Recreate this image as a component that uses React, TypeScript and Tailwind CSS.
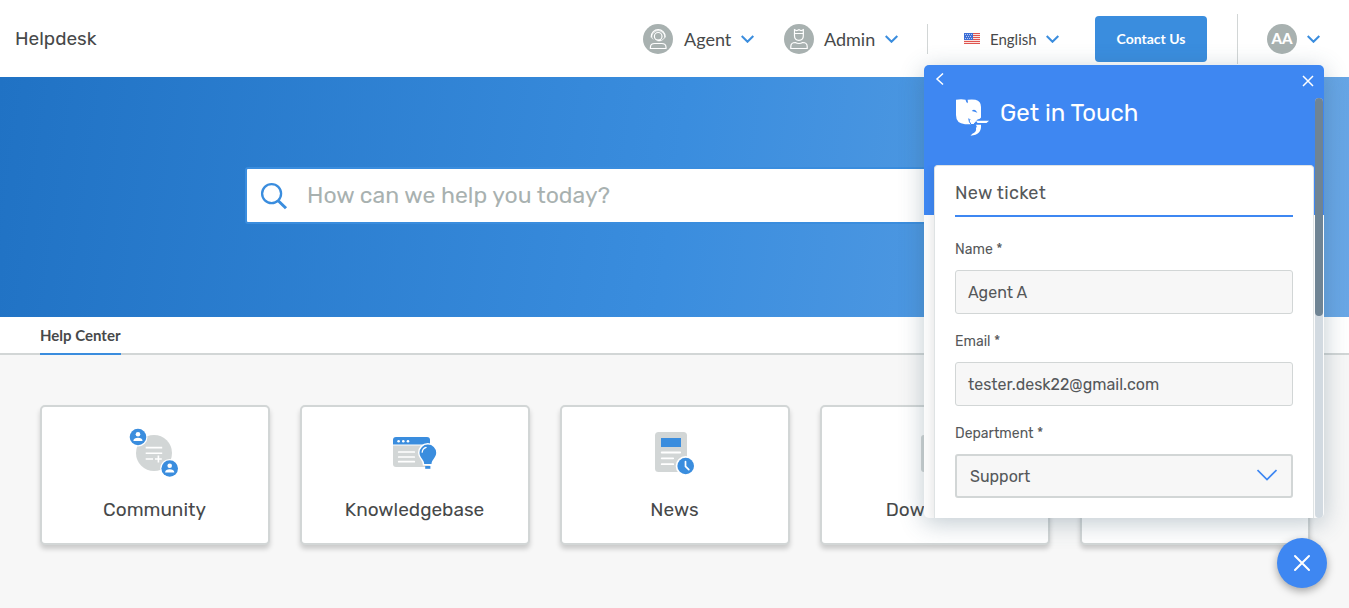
import React from 'react';

const rubik = "font-['Rubik','Roboto',sans-serif]";
const lato = "font-['Lato',sans-serif]";

function Chevron({ className }: { className: string }) {
  return (
    <svg viewBox="0 0 14 8" className={`block shrink-0 ${className}`} fill="none" stroke="#3a8dde" strokeWidth="2.100">
      <path d="M.7 1l5.800 5.700L12.300 1" />
    </svg>
  );
}

function AgentAvatar() {
  return (
    <svg viewBox="0 0 30 30" className="block size-[30px] shrink-0" fill="none" stroke="#fff" strokeWidth="1">
      <circle cx="15" cy="15" r="15" fill="#a8b1b0" stroke="none" />
      <path d="M8.300 13.500v-1a6.900 6.900 0 0 1 13.800 0v1" strokeWidth="1.200" />
      <circle cx="15.200" cy="12.300" r="3.800" strokeWidth="1.200" />
      <path d="M10.300 15.300c-2-.6-2-5.200 0-6 2.200-3.500 7.600-3.500 9.800 0 2 .8 2 5.400 0 6l-1.600 1.200h-3" strokeWidth=".8" />
      <path d="M14.500 16.500h3" strokeWidth="1.500" />
      <path d="M7.400 24.500v-1.300c0-2.300 1.800-3.700 4.400-3.700h6.800c2.600 0 4.400 1.400 4.400 3.700v1.300z" strokeWidth="1.200" />
    </svg>
  );
}

function AdminAvatar() {
  return (
    <svg viewBox="0 0 30 30" className="block size-[30px] shrink-0" fill="none" stroke="#fff" strokeWidth="1.200">
      <circle cx="15" cy="15" r="15" fill="#a8b1b0" stroke="none" />
      <path d="M10.500 10V5.600l2.200 1.100L15 5.600l2.100 1.100 2.200-1.100V10" />
      <path d="M10.500 9.500h8.800" strokeWidth="1" />
      <path d="M10.500 9.500v2.600c0 2.500 1.900 4.200 4.400 4.200s4.400-1.700 4.400-4.200V9.500" />
      <path d="M6.800 24.500v-2c0-2.500 2-4 4.600-4 1.100.7 2.300 1 3.600 1s2.500-.3 3.600-1c2.600 0 4.600 1.500 4.600 4v2z" />
    </svg>
  );
}

function Flag() {
  return (
    <svg viewBox="0 0 16 11" className="block h-[11px] w-4 shrink-0">
      <rect width="16" height="11" fill="#fbe3e0" />
      <path d="M0 .5h16M0 2.500h16M0 4.500h16M0 6.500h16M0 8.500h16M0 10.500h16" stroke="#df5550" />
      <rect width="9" height="7" fill="#3d6fd6" />
      <path d="M1 1.500h7M2 3.500h6M1 5.500h7" stroke="#b9caf0" strokeDasharray="1 1" />
    </svg>
  );
}

function Person({ x, y }: { x: number; y: number }) {
  return (
    <g transform={`translate(${x} ${y})`}>
      <circle r="9.500" fill="#fff" />
      <circle r="8.300" fill="#3a8dde" />
      <circle cy="-2.700" r="2.300" fill="#fff" />
      <path d="M-4.600 4c0-2.400 2.200-3.300 4.600-3.300S4.600 1.600 4.600 4z" fill="#fff" />
    </g>
  );
}

function CommunityIcon() {
  return (
    <svg viewBox="0 0 50 50" className="block size-[50px]">
      <circle cx="25" cy="25" r="18" fill="#d2d6d6" />
      <path d="M16.700 19.600h16.500M16.700 25.300h16.500M16.700 31h7.300M26 31h6.800M29.400 27.500v7" stroke="#fff" strokeWidth="1.600" />
      <Person x={9} y={9} />
      <Person x={40.700} y={40.500} />
    </svg>
  );
}

function KnowledgeIcon() {
  return (
    <svg viewBox="0 0 50 50" className="block size-[50px]">
      <path d="M4 17.600h37V36a3 3 0 0 1-3 3H7a3 3 0 0 1-3-3z" fill="#d2d6d6" />
      <path d="M7 9h31a3 3 0 0 1 3 3v4.600H4V12a3 3 0 0 1 3-3z" fill="#3a8dde" />
      <g fill="#fff">
        <circle cx="9.600" cy="13.300" r="1.300" />
        <circle cx="14.300" cy="13.300" r="1.300" />
        <circle cx="19" cy="13.300" r="1.300" />
      </g>
      <path d="M9.700 24h15.600M9.700 29h15.600M9.700 33.700h15.600" stroke="#fff" strokeWidth="1.700" strokeLinecap="round" />
      <path
        d="M38.900 16.500a8.300 8.300 0 0 0-8.400 8.300c0 2.400 1.200 4.300 2.600 6.100 1.300 1.700 1.900 2.900 2.100 5.100h7.300c.2-2.200.8-3.400 2.100-5.100 1.400-1.800 2.600-3.700 2.600-6.100a8.300 8.300 0 0 0-8.300-8.300z"
        fill="#3a8dde" stroke="#fff" strokeWidth="3" paintOrder="stroke"
      />
      <path d="M36.200 38h5.200v2.800h-5.200z" fill="#3a8dde" />
      <path d="M33.200 24.200c.2-2.300 1.600-4.100 3.900-4.800" stroke="#fff" strokeWidth="1.300" fill="none" strokeLinecap="round" />
    </svg>
  );
}

function NewsIcon() {
  return (
    <svg viewBox="0 0 50 50" className="block size-[50px]">
      <rect x="6" y="4" width="32" height="40" rx="3.500" fill="#d2d6d6" />
      <path d="M12 10h20v9H12z" fill="#3a8dde" />
      <path d="M12.700 24.500h18.500M12.700 30.300h11.500M12.700 36.200h11.500" stroke="#fff" strokeWidth="1.800" strokeLinecap="round" />
      <circle cx="36.700" cy="38" r="10" fill="#fff" />
      <circle cx="36.700" cy="38" r="8.300" fill="#3a8dde" />
      <path d="M36.500 33.500v4.800l3.300 3.300" stroke="#fff" strokeWidth="1.700" fill="none" strokeLinecap="round" />
    </svg>
  );
}

function DownloadsIcon() {
  return (
    <svg viewBox="0 0 50 50" className="block size-[50px]">
      <rect x="12" y="7" width="30" height="37" rx="3" fill="#d2d6d6" />
      <path d="M26 16v16m-6-6 6 6 6-6" stroke="#3a8dde" strokeWidth="3" fill="none" />
    </svg>
  );
}

function HelpCard({ icon, label }: { icon?: React.ReactNode; label?: string }) {
  return (
    <div className="flex h-[140px] w-[230px] shrink-0 flex-col items-center rounded-[5px] border-2 border-[#d2d6d6] bg-white pt-[21px] shadow-[0_4px_5px_rgba(0,0,0,0.18)]">
      <div className="mr-[2px] h-[50px]">{icon}</div>
      <div className={`mt-[20px] mr-px text-[19px] leading-6 text-[#47494a] ${rubik}`}>{label}</div>
    </div>
  );
}

function Header() {
  return (
    <header className={`flex h-[77px] items-center bg-white text-[#47494a] ${lato}`}>
      <div className={`ml-[15px] w-[628px] text-[19px] leading-6 ${rubik}`}>Helpdesk</div>
      <AgentAvatar />
      <span className="ml-[11px] w-[57px] pt-[2px] text-[18px]">Agent</span>
      <Chevron className="h-2 w-[14px]" />
      <div className="ml-[29px]"><AdminAvatar /></div>
      <span className="ml-[10px] w-[61px] pt-[2px] text-[18px]">Admin</span>
      <Chevron className="h-2 w-[14px]" />
      <div className="ml-[28px] h-[30px] w-px bg-[#d2d6d6]" />
      <div className="ml-[36px]"><Flag /></div>
      <span className="ml-[10px] w-[56px] pt-[2px] text-[15px]">English</span>
      <Chevron className="h-2 w-[14px]" />
      <button className="ml-[35px] flex h-[46px] w-[112px] items-center justify-center rounded bg-[#3a8dde] text-[14px] font-bold whitespace-nowrap text-white">
        Contact Us
      </button>
      <div className="ml-[30px] h-[50px] w-px bg-[#d2d6d6]" />
      <div className="ml-[29px] flex size-[30px] items-center justify-center rounded-full bg-[#a8b1b0] text-[15px] font-black text-white">AA</div>
      <Chevron className="ml-[10px] h-2 w-[14px]" />
    </header>
  );
}

function Field({ label, value }: { label: string; value: string }) {
  return (
    <div className="mb-[19px]">
      <div className="h-[29px] pt-px text-[14px] leading-[16px]">{label}</div>
      <div className="flex h-[44px] items-center rounded-[3px] border border-[#d2d6d6] bg-[#f7f7f7] px-3 pt-[2px] text-[16px]">{value}</div>
    </div>
  );
}

function Widget() {
  return (
    <aside className={`absolute top-[65px] left-[924px] h-[453px] w-[400px] rounded-[5px] bg-[#fbfbfb] text-[#55585a] shadow-[0_5px_24px_rgba(60,90,110,0.32)] ${rubik}`}>
      <div className="h-[150px] rounded-t-[5px] bg-[#3e87f2] text-white">
        <div className="flex h-[33px] justify-between pt-[8px] pr-[10px] pl-[11px]">
          <svg viewBox="0 0 10 14" className="h-[14px] w-[10px]" fill="none" stroke="currentColor" strokeWidth="1.500">
            <path d="M8 .5L2 6 8 11.500" />
          </svg>
          <svg viewBox="0 0 12 12" className="mt-[2px] size-3" fill="none" stroke="currentColor" strokeWidth="1.500">
            <path d="M1 1l10 10M11 1L1 11" />
          </svg>
        </div>
        <div className="flex pl-8">
          <svg viewBox="0 0 33 38" className="h-[38px] w-[33px]" fill="#fff">
            <path d="M0 1.700Q5.500.900 9.500 1.700q.5 2.300 1.900 3.600.9-1 .2-3.500Q16 1 19.500 1.800 25 3 25 9v10.500q-.5 1.500-3.500 2L18.500 25l-5-4.200q-1.200 1 .2 3.500l1.300 1.900H9Q0 25.500 0 17z" />
            <path d="M13.300 21.500l1 4.500h3.500l1-3z" />
            <path d="M12.700 20.500q.3 3.500 2.100 5.500" fill="none" stroke="#3e87f2" strokeWidth="1" />
            <path d="M20 22.800h13l-2.500 2.300h-9z" />
            <path d="M19.800 26.800H25q1 10-10.500 11l1.800-2q4.500-2 3.700-5.500l.8-2z" />
            <path d="M15.800 13q2.900-3.400 5.600 1.700-2.800-1.200-5.600-1.700z" fill="#3e87f2" />
          </svg>
          <h2 className="ml-[11px] pt-[1px] text-[24px] leading-[28px] font-normal">Get in Touch</h2>
        </div>
      </div>
      <div className="relative -mt-[50px] ml-[10px] h-[353px] w-[380px] rounded-t border border-b-0 border-[#dfe3e4] bg-white px-5 pt-[15px] shadow-[-2px_2px_8px_rgba(0,0,0,0.08)] [clip-path:inset(0_0_0_-10px)]">
        <div className="mb-6 h-[36px] border-b-2 border-[#3e87f2] text-[18px] leading-6 tracking-[0.350px]">New ticket</div>
        <Field label="Name *" value="Agent A" />
        <Field label="Email *" value="tester.desk22@gmail.com" />
        <div className="h-[29px] pt-px text-[14px] leading-[16px]">Department *</div>
        <div className="flex h-[44px] items-center justify-between rounded-[3px] border-2 border-[#d2d6d6] bg-[#f7f7f7] pr-[14px] pl-[13px] pt-[2px] text-[16px]">
          Support
          <svg viewBox="0 0 20 12" className="-mt-[5px] h-3 w-5" fill="none" stroke="#3e87f2" strokeWidth="1.700">
            <path d="M.5 1L10 10.500 19.500 1" />
          </svg>
        </div>
      </div>
      <div className="absolute top-[33px] right-px h-[420px] w-2 rounded bg-[#d2dae1]">
        <div className="h-[218px] w-2 rounded bg-[#6f8494]" />
      </div>
    </aside>
  );
}

export default function App() {
  return (
    <div className="relative h-[608px] w-[1349px] overflow-hidden bg-[#f7f7f7]">
      <Header />
      <section className="h-[240px] bg-[linear-gradient(98deg,#2072c4_0%,#3a8dde_50%,#69a7e6_100%)] pt-[90px]">
        <div className="ml-[245px] flex h-[57px] w-[858px] items-center rounded-[3px] border-2 border-[#3a8dde] bg-white">
          <svg viewBox="0 0 28 28" className="ml-[13px] size-7" fill="none" stroke="#3a8dde" strokeWidth="2.300">
            <circle cx="11.600" cy="11.600" r="9.500" />
            <path d="M18.500 19l7.500 7.300" strokeWidth="3" />
          </svg>
          <span className={`-mt-[2px] ml-[19px] text-[23px] leading-7 text-[#a8b1b0] ${rubik}`}>How can we help you today?</span>
        </div>
      </section>
      <nav className={`flex h-[38px] border-b-2 border-[#d2d6d6] bg-white pl-10 ${lato}`}>
        <div className="h-[38px] w-[81px] border-b-2 border-[#3a8dde] pt-[6px] text-[15px] leading-6 font-bold whitespace-nowrap text-[#47494a]">Help Center</div>
      </nav>
      <main className="flex gap-[30px] px-10 pt-[50px]">
        <HelpCard icon={<CommunityIcon />} label="Community" />
        <HelpCard icon={<KnowledgeIcon />} label="Knowledgebase" />
        <HelpCard icon={<NewsIcon />} label="News" />
        <HelpCard icon={<DownloadsIcon />} label="Downloads" />
        <HelpCard />
      </main>
      <Widget />
      <button className="absolute top-[538px] left-[1277px] flex size-[50px] items-center justify-center rounded-full bg-[#3e87f2] shadow-[0_3px_8px_rgba(0,0,0,0.35)]">
        <svg viewBox="0 0 18 18" className="size-[18px]" fill="none" stroke="#fff" strokeWidth="2" strokeLinecap="round">
          <path d="M2 2l14 14M16 2L2 16" />
        </svg>
      </button>
    </div>
  );
}
